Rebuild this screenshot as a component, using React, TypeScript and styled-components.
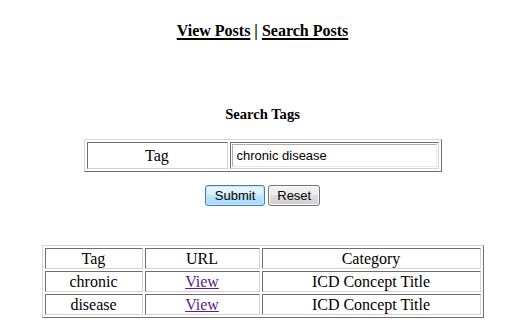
import styled, { createGlobalStyle } from "styled-components";

const GlobalStyle = createGlobalStyle`
  html, body {
    margin: 0;
    padding: 0;
    background: #ffffff;
  }
  body {
    font-family: "Liberation Serif", "Times New Roman", serif;
    font-size: 16px;
    color: #000000;
  }
`;

const Page = styled.div`
  width: 505px;
  padding-left: 10px;
  display: flex;
  flex-direction: column;
  align-items: center;
`;

const NavBar = styled.div`
  margin-top: 21px;
  font-weight: 700;
  font-size: 16px;
  line-height: 20px;
`;

const NavLink = styled.a`
  color: #000000;
  text-decoration: underline;
  text-decoration-thickness: 2px;
  text-underline-offset: 2px;
`;

const SectionTitle = styled.div`
  margin-top: 64px;
  font-weight: 700;
  font-size: 14.6px;
  line-height: 18px;
`;

const BorderedTable = styled.table<{ width: number }>`
  width: ${({ width }) => width}px;
  border-collapse: separate;
  border-spacing: 2px;
  border: 1px solid;
  border-color: #d4d4d4 #6e6e6e #6e6e6e #d4d4d4;
  table-layout: fixed;
`;

const Cell = styled.td<{ width?: number }>`
  ${({ width }) => (width ? `width: ${width}px;` : "")}
  border: 1px solid;
  border-color: #6e6e6e #d4d4d4 #d4d4d4 #6e6e6e;
  padding: 0 1px;
  text-align: center;
  height: 19px;
  line-height: 19px;
`;

const FormTable = styled(BorderedTable)`
  margin-top: 16px;
`;

const FormCell = styled(Cell)`
  height: 23px;
`;

const InputCell = styled.td`
  border: 1px solid;
  border-color: #6e6e6e #d4d4d4 #d4d4d4 #6e6e6e;
  padding: 1px;
`;

const TextInput = styled.input`
  box-sizing: border-box;
  width: 100%;
  height: 23px;
  border: 1px solid;
  border-color: #abadb3 #e3e9ef #e3e9ef #abadb3;
  padding: 1px 4px;
  font-family: "Liberation Sans", Arial, sans-serif;
  font-size: 13px;
  color: #000000;
  outline: none;
`;

const ButtonRow = styled.div`
  margin-top: 13px;
  display: flex;
  gap: 3px;
`;

const Button = styled.button<{ primary?: boolean }>`
  height: 21px;
  padding: 0 ${({ primary }) => (primary ? 9 : 8)}px;
  border-radius: 3px;
  font-family: "Liberation Sans", Arial, sans-serif;
  font-size: 13px;
  color: #000000;
  border: 1px solid ${({ primary }) => (primary ? "#3c7fb1" : "#707070")};
  background: ${({ primary }) =>
    primary
      ? "linear-gradient(#eaf6fd 0%, #d9f0fc 50%, #bee6fd 50%, #a7d9f5 100%)"
      : "linear-gradient(#f2f2f2 0%, #ebebeb 50%, #dddddd 50%, #cfcfcf 100%)"};
  box-shadow: inset 0 0 0 1px ${({ primary }) => (primary ? "#c6e7f9" : "#fcfcfc")};
`;

const ResultsTable = styled(BorderedTable)`
  margin-top: 39px;
`;

const ViewLink = styled.a`
  color: #5c1a8b;
  text-decoration: underline;
`;

const results = [
  { tag: "chronic", category: "ICD Concept Title" },
  { tag: "disease", category: "ICD Concept Title" },
];

export default function App() {
  return (
    <>
      <GlobalStyle />
      <Page>
        <NavBar>
          <NavLink href="#">View Posts</NavLink> | <NavLink href="#">Search Posts</NavLink>
        </NavBar>
        <SectionTitle>Search Tags</SectionTitle>
        <FormTable width={358}>
          <tbody>
            <tr>
              <FormCell width={137}>Tag</FormCell>
              <InputCell>
                <TextInput defaultValue="chronic disease" />
              </InputCell>
            </tr>
          </tbody>
        </FormTable>
        <ButtonRow>
          <Button primary>Submit</Button>
          <Button>Reset</Button>
        </ButtonRow>
        <ResultsTable width={442}>
          <tbody>
            <tr>
              <Cell width={94}>Tag</Cell>
              <Cell width={111}>URL</Cell>
              <Cell>Category</Cell>
            </tr>
            {results.map((row) => (
              <tr key={row.tag}>
                <Cell>{row.tag}</Cell>
                <Cell>
                  <ViewLink href="#">View</ViewLink>
                </Cell>
                <Cell>{row.category}</Cell>
              </tr>
            ))}
          </tbody>
        </ResultsTable>
      </Page>
    </>
  );
}
